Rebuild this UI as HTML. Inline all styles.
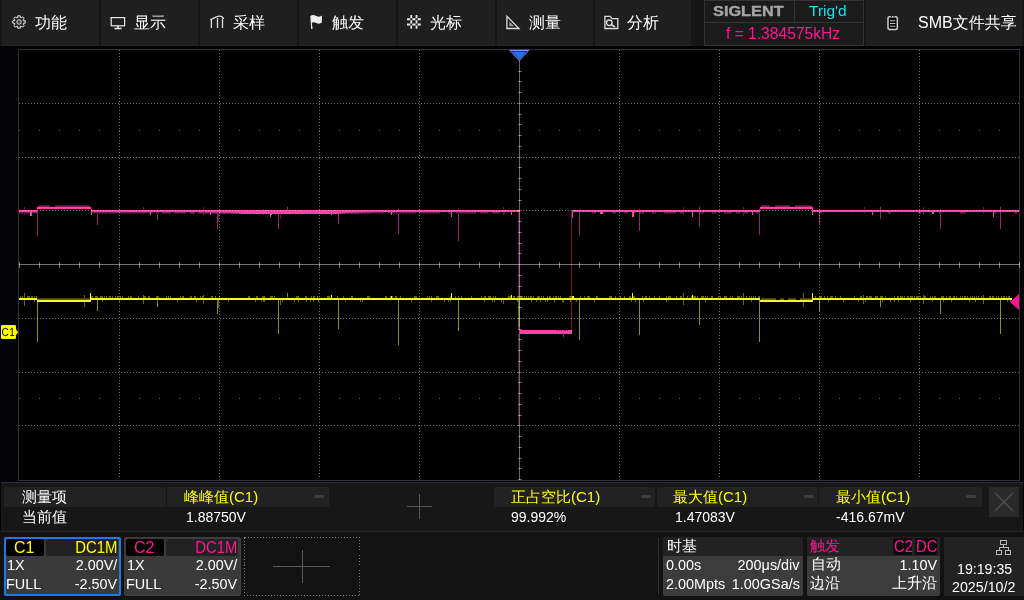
<!DOCTYPE html>
<html lang="zh-CN">
<head>
<meta charset="utf-8">
<title>SIGLENT Oscilloscope</title>
<style>
html,body{margin:0;padding:0;}
body{width:1024px;height:600px;overflow:hidden;background:#030308;position:relative;
 font-family:"Liberation Sans","WenQuanYi Zen Hei","Noto Sans CJK SC",sans-serif;color:#ffffff;}
.abs,.graph,.tb,.t{position:absolute;}
.graph{left:0;top:0;}
/* top bar */
#topbar{position:absolute;left:0;top:0;width:1024px;height:46px;background:#161616;}
.tb{top:0;height:45px;background:#1f1f1f;border-bottom:1px solid #262626;box-sizing:content-box;height:45px;}
.tb .lbl{position:absolute;left:33px;top:0;line-height:45px;font-size:16px;white-space:nowrap;color:#fff;}
.tb svg{position:absolute;}
.t{white-space:nowrap;line-height:1;}
#wrap{position:absolute;left:0;top:0;width:1024px;height:600px;will-change:transform;}
/* status */
#status{position:absolute;left:704px;top:0;width:158px;height:44px;border:1px solid #333;background:#1b1b1b;}
/* measure */
#meas{position:absolute;left:1px;top:482px;width:1022px;height:48px;background:#171717;border-top:1px solid #2a2a30;}
.mh{position:absolute;top:487px;height:20px;background:#222222;}
.ml{position:absolute;top:489px;font-size:15px;line-height:16px;white-space:nowrap;}
.mv{position:absolute;top:509px;font-size:14px;line-height:16px;white-space:nowrap;color:#fff;}
.sl{transform:scaleX(.96);transform-origin:0 0;}
.sr{transform:scaleX(.96);transform-origin:100% 0;}
.hl{transform:scaleX(.93);transform-origin:0 0;}
.hr{transform:scaleX(.93);transform-origin:100% 0;}
.yl{color:#ffff00;}
.pk{color:#ff1493;}
.minus{position:absolute;top:495px;width:10px;height:3px;border-radius:1.500px;background:#3e3e3e;}
/* bottom */
#bottom{position:absolute;left:0;top:531px;width:1024px;height:69px;background:#121212;border-top:1px solid #26262c;}
.ch{position:absolute;top:537px;width:116.500px;height:58.500px;background:#3a3a3a;box-sizing:border-box;border-radius:2px;}
.box{position:absolute;top:537px;height:58.500px;background:#3c3c3c;border-radius:2px;}
</style>
</head>
<body>
<div id="wrap">
<svg class="graph" width="1024" height="600" viewBox="0 0 1024 600" shape-rendering="crispEdges"><rect x="18.5" y="49.5" width="1001" height="431" fill="#000" stroke="#2f2f34"/><g><rect x="518" y="212" width="1" height="118" fill="#641644"/><rect x="519" y="212" width="1" height="118" fill="#3a122c"/><rect x="518" y="334" width="1" height="92" fill="#5a143e"/><rect x="571" y="212" width="1" height="118" fill="#6c1649"/><rect x="563" y="334" width="1" height="3" fill="#9c206a"/><rect x="24" y="207" width="1" height="8" fill="#6a1646"/><rect x="37" y="209" width="1" height="27" fill="#9c206a"/><rect x="97" y="211" width="1" height="14" fill="#9c206a"/><rect x="143" y="207" width="1" height="8" fill="#6a1646"/><rect x="157" y="211" width="1" height="9" fill="#9c206a"/><rect x="203" y="207" width="1" height="8" fill="#6a1646"/><rect x="217" y="211" width="1" height="18" fill="#9c206a"/><rect x="218" y="211" width="1" height="11" fill="#6a1646"/><rect x="263" y="209" width="1" height="6" fill="#6a1646"/><rect x="278" y="211" width="1" height="18" fill="#9c206a"/><rect x="280" y="211" width="1" height="8" fill="#6a1646"/><rect x="287" y="207" width="1" height="4" fill="#9c206a"/><rect x="289" y="211" width="1" height="4" fill="#6a1646"/><rect x="338" y="211" width="1" height="13" fill="#9c206a"/><rect x="398" y="209" width="1" height="25" fill="#9c206a"/><rect x="458" y="209" width="1" height="32" fill="#9c206a"/><rect x="503" y="207" width="1" height="8" fill="#6a1646"/><rect x="579" y="209" width="1" height="27" fill="#9c206a"/><rect x="639" y="209" width="1" height="22" fill="#9c206a"/><rect x="683" y="207" width="1" height="8" fill="#6a1646"/><rect x="699" y="207" width="1" height="20" fill="#9c206a"/><rect x="743" y="207" width="1" height="9" fill="#6a1646"/><rect x="759" y="209" width="1" height="26" fill="#9c206a"/><rect x="819" y="211" width="1" height="13" fill="#9c206a"/><rect x="864" y="207" width="1" height="6" fill="#6a1646"/><rect x="880" y="207" width="1" height="12" fill="#9c206a"/><rect x="923" y="207" width="1" height="8" fill="#6a1646"/><rect x="940" y="209" width="1" height="20" fill="#9c206a"/><rect x="983" y="207" width="1" height="6" fill="#6a1646"/><rect x="1000" y="207" width="1" height="22" fill="#9c206a"/><rect x="19" y="212" width="18" height="1" fill="#6a1a46"/><rect x="93" y="212" width="60" height="1" fill="#6a1a46"/><rect x="156" y="212" width="3" height="1" fill="#6a1a46"/><rect x="162" y="212" width="9" height="1" fill="#822055"/><rect x="174" y="212" width="12" height="1" fill="#822055"/><rect x="189" y="212" width="6" height="1" fill="#822055"/><rect x="198" y="212" width="9" height="1" fill="#822055"/><rect x="207" y="212" width="8" height="1" fill="#9a2765"/><rect x="215" y="212" width="9" height="1" fill="#b22e75"/><rect x="224" y="212" width="9" height="1" fill="#ca3484"/><rect x="233" y="212" width="8" height="1" fill="#e23b94"/><rect x="241" y="212" width="98" height="1" fill="#fa42a4"/><rect x="339" y="212" width="6" height="1" fill="#e23b94"/><rect x="345" y="212" width="7" height="1" fill="#ca3484"/><rect x="352" y="212" width="7" height="1" fill="#b22e75"/><rect x="359" y="212" width="6" height="1" fill="#9a2765"/><rect x="365" y="212" width="7" height="1" fill="#822055"/><rect x="372" y="212" width="12" height="1" fill="#6a1a46"/><rect x="388" y="212" width="28" height="1" fill="#6a1a46"/><rect x="420" y="212" width="20" height="1" fill="#6a1a46"/><rect x="448" y="212" width="4" height="1" fill="#6a1a46"/><rect x="456" y="212" width="20" height="1" fill="#6a1a46"/><rect x="480" y="212" width="8" height="1" fill="#6a1a46"/><rect x="492" y="212" width="8" height="1" fill="#6a1a46"/><rect x="504" y="212" width="1" height="1" fill="#6a1a46"/><rect x="592" y="212" width="4" height="1" fill="#6a1a46"/><rect x="600" y="212" width="4" height="1" fill="#6a1a46"/><rect x="612" y="212" width="4" height="1" fill="#6a1a46"/><rect x="624" y="212" width="4" height="1" fill="#6a1a46"/><rect x="632" y="212" width="4" height="1" fill="#6a1a46"/><rect x="640" y="212" width="4" height="1" fill="#6a1a46"/><rect x="652" y="212" width="4" height="1" fill="#6a1a46"/><rect x="664" y="212" width="12" height="1" fill="#6a1a46"/><rect x="680" y="212" width="4" height="1" fill="#6a1a46"/><rect x="700" y="212" width="4" height="1" fill="#6a1a46"/><rect x="712" y="212" width="4" height="1" fill="#6a1a46"/><rect x="724" y="212" width="8" height="1" fill="#6a1a46"/><rect x="736" y="212" width="4" height="1" fill="#6a1a46"/><rect x="744" y="212" width="4" height="1" fill="#6a1a46"/><rect x="756" y="212" width="4" height="1" fill="#6a1a46"/><rect x="819" y="212" width="3" height="1" fill="#6a1a46"/><rect x="888" y="212" width="3" height="1" fill="#6a1a46"/><rect x="918" y="212" width="3" height="1" fill="#6a1a46"/><rect x="939" y="212" width="3" height="1" fill="#6a1a46"/><rect x="960" y="212" width="6" height="1" fill="#6a1a46"/><rect x="993" y="212" width="3" height="1" fill="#6a1a46"/><rect x="1014" y="212" width="3" height="1" fill="#6a1a46"/><rect x="19" y="213" width="18" height="1" fill="#440f2d"/><rect x="93" y="213" width="60" height="1" fill="#440f2d"/><rect x="156" y="213" width="3" height="1" fill="#440f2d"/><rect x="162" y="213" width="9" height="1" fill="#440f2d"/><rect x="174" y="213" width="12" height="1" fill="#440f2d"/><rect x="189" y="213" width="2" height="1" fill="#440f2d"/><rect x="191" y="213" width="4" height="1" fill="#5e163e"/><rect x="198" y="213" width="18" height="1" fill="#5e163e"/><rect x="216" y="213" width="15" height="1" fill="#781e4f"/><rect x="231" y="213" width="8" height="1" fill="#922560"/><rect x="239" y="213" width="2" height="1" fill="#e03b93"/><rect x="241" y="213" width="98" height="1" fill="#fa42a4"/><rect x="339" y="213" width="2" height="1" fill="#e03b93"/><rect x="341" y="213" width="5" height="1" fill="#922560"/><rect x="346" y="213" width="12" height="1" fill="#781e4f"/><rect x="358" y="213" width="12" height="1" fill="#5e163e"/><rect x="370" y="213" width="14" height="1" fill="#440f2d"/><rect x="388" y="213" width="28" height="1" fill="#440f2d"/><rect x="420" y="213" width="20" height="1" fill="#440f2d"/><rect x="448" y="213" width="4" height="1" fill="#440f2d"/><rect x="456" y="213" width="20" height="1" fill="#440f2d"/><rect x="480" y="213" width="8" height="1" fill="#440f2d"/><rect x="492" y="213" width="8" height="1" fill="#440f2d"/><rect x="504" y="213" width="1" height="1" fill="#440f2d"/><rect x="592" y="213" width="4" height="1" fill="#440f2d"/><rect x="600" y="213" width="4" height="1" fill="#440f2d"/><rect x="612" y="213" width="4" height="1" fill="#440f2d"/><rect x="624" y="213" width="4" height="1" fill="#440f2d"/><rect x="632" y="213" width="4" height="1" fill="#440f2d"/><rect x="640" y="213" width="4" height="1" fill="#440f2d"/><rect x="652" y="213" width="4" height="1" fill="#440f2d"/><rect x="664" y="213" width="12" height="1" fill="#440f2d"/><rect x="680" y="213" width="4" height="1" fill="#440f2d"/><rect x="700" y="213" width="4" height="1" fill="#440f2d"/><rect x="712" y="213" width="4" height="1" fill="#440f2d"/><rect x="724" y="213" width="8" height="1" fill="#440f2d"/><rect x="736" y="213" width="4" height="1" fill="#440f2d"/><rect x="744" y="213" width="4" height="1" fill="#440f2d"/><rect x="756" y="213" width="4" height="1" fill="#440f2d"/><rect x="819" y="213" width="3" height="1" fill="#440f2d"/><rect x="888" y="213" width="3" height="1" fill="#440f2d"/><rect x="918" y="213" width="3" height="1" fill="#440f2d"/><rect x="939" y="213" width="3" height="1" fill="#440f2d"/><rect x="960" y="213" width="6" height="1" fill="#440f2d"/><rect x="993" y="213" width="3" height="1" fill="#440f2d"/><rect x="1014" y="213" width="3" height="1" fill="#440f2d"/><rect x="19" y="210" width="18" height="2" fill="#fa42a4"/><rect x="91" y="210" width="429" height="2" fill="#fa42a4"/><rect x="572" y="210" width="188" height="2" fill="#fa42a4"/><rect x="813" y="210" width="206" height="2" fill="#fa42a4"/><rect x="37" y="207" width="54" height="2" fill="#fa42a4"/><rect x="38" y="205" width="12" height="1" fill="#521336"/><rect x="55" y="205" width="35" height="1" fill="#521336"/><rect x="38" y="206" width="12" height="1" fill="#822055"/><rect x="55" y="206" width="35" height="1" fill="#822055"/><rect x="760" y="207" width="53" height="2" fill="#fa42a4"/><rect x="761" y="205" width="9" height="1" fill="#521336"/><rect x="775" y="205" width="15" height="1" fill="#521336"/><rect x="795" y="205" width="17" height="1" fill="#521336"/><rect x="761" y="206" width="9" height="1" fill="#822055"/><rect x="775" y="206" width="15" height="1" fill="#822055"/><rect x="795" y="206" width="17" height="1" fill="#822055"/><rect x="520" y="330" width="52" height="4" fill="#fa42a4"/><rect x="556" y="330" width="2" height="1" fill="#9c206a"/><rect x="559" y="330" width="1" height="1" fill="#9c206a"/><rect x="561" y="330" width="1" height="1" fill="#9c206a"/><rect x="564" y="330" width="2" height="1" fill="#9c206a"/><rect x="567" y="330" width="1" height="1" fill="#9c206a"/><rect x="30" y="211" width="2" height="5" fill="#fa42a4"/><rect x="91" y="209" width="1" height="6" fill="#fa42a4"/><rect x="150" y="211" width="1" height="4" fill="#fa42a4"/><rect x="210" y="211" width="1" height="4" fill="#fa42a4"/><rect x="270" y="211" width="1" height="6" fill="#fa42a4"/><rect x="271" y="211" width="1" height="4" fill="#fa42a4"/><rect x="331" y="211" width="1" height="4" fill="#fa42a4"/><rect x="391" y="211" width="1" height="4" fill="#fa42a4"/><rect x="451" y="211" width="1" height="6" fill="#fa42a4"/><rect x="511" y="211" width="1" height="4" fill="#fa42a4"/><rect x="572" y="211" width="1" height="7" fill="#fa42a4"/><rect x="600" y="211" width="3" height="3" fill="#fa42a4"/><rect x="632" y="211" width="2" height="6" fill="#fa42a4"/><rect x="692" y="211" width="1" height="6" fill="#fa42a4"/><rect x="752" y="211" width="1" height="4" fill="#fa42a4"/><rect x="812" y="209" width="1" height="6" fill="#fa42a4"/><rect x="872" y="211" width="1" height="4" fill="#fa42a4"/><rect x="932" y="211" width="2" height="3" fill="#fa42a4"/><rect x="993" y="211" width="1" height="6" fill="#fa42a4"/></g><g><rect x="24" y="293" width="1" height="13" fill="#66660f"/><rect x="37" y="299" width="1" height="43" fill="#8e8e1a"/><rect x="84" y="295" width="1" height="12" fill="#66660f"/><rect x="97" y="299" width="1" height="12" fill="#8e8e1a"/><rect x="143" y="295" width="1" height="9" fill="#66660f"/><rect x="157" y="299" width="1" height="8" fill="#8e8e1a"/><rect x="203" y="295" width="1" height="9" fill="#66660f"/><rect x="217" y="299" width="1" height="15" fill="#8e8e1a"/><rect x="218" y="299" width="1" height="9" fill="#66660f"/><rect x="263" y="296" width="1" height="6" fill="#66660f"/><rect x="278" y="299" width="1" height="35" fill="#8e8e1a"/><rect x="280" y="299" width="1" height="6" fill="#66660f"/><rect x="287" y="293" width="1" height="6" fill="#8e8e1a"/><rect x="338" y="299" width="1" height="30" fill="#8e8e1a"/><rect x="398" y="299" width="1" height="46" fill="#8e8e1a"/><rect x="458" y="299" width="1" height="32" fill="#8e8e1a"/><rect x="503" y="299" width="1" height="5" fill="#66660f"/><rect x="518" y="299" width="2" height="28" fill="#66660f"/><rect x="563" y="299" width="1" height="4" fill="#66660f"/><rect x="579" y="299" width="1" height="41" fill="#8e8e1a"/><rect x="639" y="299" width="1" height="36" fill="#8e8e1a"/><rect x="683" y="293" width="1" height="12" fill="#66660f"/><rect x="699" y="299" width="1" height="26" fill="#8e8e1a"/><rect x="743" y="293" width="1" height="12" fill="#66660f"/><rect x="759" y="299" width="1" height="43" fill="#8e8e1a"/><rect x="803" y="293" width="1" height="14" fill="#66660f"/><rect x="819" y="299" width="1" height="12" fill="#8e8e1a"/><rect x="863" y="295" width="1" height="9" fill="#66660f"/><rect x="880" y="299" width="1" height="8" fill="#8e8e1a"/><rect x="923" y="295" width="1" height="9" fill="#66660f"/><rect x="940" y="299" width="1" height="15" fill="#8e8e1a"/><rect x="983" y="295" width="1" height="9" fill="#66660f"/><rect x="1000" y="299" width="1" height="35" fill="#8e8e1a"/><rect x="20" y="296" width="1" height="2" fill="#66660f"/><rect x="22" y="296" width="1" height="2" fill="#66660f"/><rect x="27" y="296" width="3" height="2" fill="#66660f"/><rect x="31" y="296" width="2" height="2" fill="#66660f"/><rect x="34" y="296" width="1" height="2" fill="#66660f"/><rect x="36" y="296" width="1" height="2" fill="#66660f"/><rect x="34" y="300" width="1" height="2" fill="#66660f"/><rect x="19" y="298" width="18" height="2" fill="#f6f62c"/><rect x="91" y="296" width="2" height="2" fill="#66660f"/><rect x="95" y="296" width="3" height="2" fill="#66660f"/><rect x="100" y="296" width="3" height="2" fill="#66660f"/><rect x="104" y="296" width="1" height="2" fill="#66660f"/><rect x="106" y="296" width="1" height="2" fill="#66660f"/><rect x="109" y="296" width="2" height="2" fill="#66660f"/><rect x="112" y="296" width="1" height="2" fill="#66660f"/><rect x="115" y="296" width="1" height="2" fill="#66660f"/><rect x="117" y="296" width="2" height="2" fill="#66660f"/><rect x="120" y="296" width="1" height="2" fill="#66660f"/><rect x="122" y="296" width="1" height="2" fill="#66660f"/><rect x="128" y="296" width="1" height="2" fill="#66660f"/><rect x="130" y="296" width="2" height="2" fill="#66660f"/><rect x="138" y="296" width="1" height="2" fill="#66660f"/><rect x="143" y="296" width="3" height="2" fill="#66660f"/><rect x="148" y="296" width="2" height="2" fill="#66660f"/><rect x="156" y="296" width="3" height="2" fill="#66660f"/><rect x="166" y="296" width="1" height="2" fill="#66660f"/><rect x="168" y="296" width="1" height="2" fill="#66660f"/><rect x="170" y="296" width="1" height="2" fill="#66660f"/><rect x="180" y="296" width="1" height="2" fill="#66660f"/><rect x="182" y="296" width="2" height="2" fill="#66660f"/><rect x="190" y="296" width="2" height="2" fill="#66660f"/><rect x="194" y="296" width="2" height="2" fill="#66660f"/><rect x="200" y="296" width="1" height="2" fill="#66660f"/><rect x="202" y="296" width="2" height="2" fill="#66660f"/><rect x="211" y="296" width="2" height="2" fill="#66660f"/><rect x="215" y="296" width="1" height="2" fill="#66660f"/><rect x="219" y="296" width="1" height="2" fill="#66660f"/><rect x="248" y="296" width="2" height="2" fill="#66660f"/><rect x="256" y="296" width="2" height="2" fill="#66660f"/><rect x="262" y="296" width="3" height="2" fill="#66660f"/><rect x="270" y="296" width="3" height="2" fill="#66660f"/><rect x="274" y="296" width="1" height="2" fill="#66660f"/><rect x="287" y="296" width="1" height="2" fill="#66660f"/><rect x="296" y="296" width="3" height="2" fill="#66660f"/><rect x="305" y="296" width="2" height="2" fill="#66660f"/><rect x="311" y="296" width="1" height="2" fill="#66660f"/><rect x="313" y="296" width="2" height="2" fill="#66660f"/><rect x="317" y="296" width="1" height="2" fill="#66660f"/><rect x="327" y="296" width="3" height="2" fill="#66660f"/><rect x="337" y="296" width="1" height="2" fill="#66660f"/><rect x="343" y="296" width="1" height="2" fill="#66660f"/><rect x="351" y="296" width="2" height="2" fill="#66660f"/><rect x="367" y="296" width="3" height="2" fill="#66660f"/><rect x="385" y="296" width="2" height="2" fill="#66660f"/><rect x="390" y="296" width="3" height="2" fill="#66660f"/><rect x="395" y="296" width="2" height="2" fill="#66660f"/><rect x="400" y="296" width="1" height="2" fill="#66660f"/><rect x="414" y="296" width="3" height="2" fill="#66660f"/><rect x="427" y="296" width="1" height="2" fill="#66660f"/><rect x="429" y="296" width="1" height="2" fill="#66660f"/><rect x="431" y="296" width="1" height="2" fill="#66660f"/><rect x="436" y="296" width="3" height="2" fill="#66660f"/><rect x="450" y="296" width="1" height="2" fill="#66660f"/><rect x="455" y="296" width="1" height="2" fill="#66660f"/><rect x="458" y="296" width="1" height="2" fill="#66660f"/><rect x="461" y="296" width="1" height="2" fill="#66660f"/><rect x="471" y="296" width="1" height="2" fill="#66660f"/><rect x="481" y="296" width="1" height="2" fill="#66660f"/><rect x="484" y="296" width="2" height="2" fill="#66660f"/><rect x="488" y="296" width="3" height="2" fill="#66660f"/><rect x="493" y="296" width="1" height="2" fill="#66660f"/><rect x="495" y="296" width="1" height="2" fill="#66660f"/><rect x="508" y="296" width="3" height="2" fill="#66660f"/><rect x="513" y="296" width="2" height="2" fill="#66660f"/><rect x="517" y="296" width="2" height="2" fill="#66660f"/><rect x="520" y="296" width="3" height="2" fill="#66660f"/><rect x="524" y="296" width="1" height="2" fill="#66660f"/><rect x="526" y="296" width="1" height="2" fill="#66660f"/><rect x="528" y="296" width="1" height="2" fill="#66660f"/><rect x="530" y="296" width="2" height="2" fill="#66660f"/><rect x="533" y="296" width="1" height="2" fill="#66660f"/><rect x="537" y="296" width="3" height="2" fill="#66660f"/><rect x="541" y="296" width="1" height="2" fill="#66660f"/><rect x="543" y="296" width="1" height="2" fill="#66660f"/><rect x="547" y="296" width="1" height="2" fill="#66660f"/><rect x="549" y="296" width="2" height="2" fill="#66660f"/><rect x="553" y="296" width="1" height="2" fill="#66660f"/><rect x="555" y="296" width="2" height="2" fill="#66660f"/><rect x="558" y="296" width="1" height="2" fill="#66660f"/><rect x="560" y="296" width="1" height="2" fill="#66660f"/><rect x="569" y="296" width="3" height="2" fill="#66660f"/><rect x="580" y="296" width="1" height="2" fill="#66660f"/><rect x="584" y="296" width="1" height="2" fill="#66660f"/><rect x="587" y="296" width="3" height="2" fill="#66660f"/><rect x="596" y="296" width="2" height="2" fill="#66660f"/><rect x="609" y="296" width="3" height="2" fill="#66660f"/><rect x="615" y="296" width="1" height="2" fill="#66660f"/><rect x="620" y="296" width="1" height="2" fill="#66660f"/><rect x="624" y="296" width="1" height="2" fill="#66660f"/><rect x="629" y="296" width="2" height="2" fill="#66660f"/><rect x="633" y="296" width="2" height="2" fill="#66660f"/><rect x="642" y="296" width="1" height="2" fill="#66660f"/><rect x="645" y="296" width="2" height="2" fill="#66660f"/><rect x="649" y="296" width="1" height="2" fill="#66660f"/><rect x="654" y="296" width="1" height="2" fill="#66660f"/><rect x="659" y="296" width="1" height="2" fill="#66660f"/><rect x="666" y="296" width="1" height="2" fill="#66660f"/><rect x="668" y="296" width="3" height="2" fill="#66660f"/><rect x="676" y="296" width="1" height="2" fill="#66660f"/><rect x="680" y="296" width="2" height="2" fill="#66660f"/><rect x="683" y="296" width="1" height="2" fill="#66660f"/><rect x="687" y="296" width="1" height="2" fill="#66660f"/><rect x="691" y="296" width="1" height="2" fill="#66660f"/><rect x="693" y="296" width="3" height="2" fill="#66660f"/><rect x="697" y="296" width="1" height="2" fill="#66660f"/><rect x="701" y="296" width="3" height="2" fill="#66660f"/><rect x="705" y="296" width="1" height="2" fill="#66660f"/><rect x="707" y="296" width="1" height="2" fill="#66660f"/><rect x="711" y="296" width="2" height="2" fill="#66660f"/><rect x="718" y="296" width="1" height="2" fill="#66660f"/><rect x="720" y="296" width="1" height="2" fill="#66660f"/><rect x="724" y="296" width="3" height="2" fill="#66660f"/><rect x="730" y="296" width="1" height="2" fill="#66660f"/><rect x="732" y="296" width="1" height="2" fill="#66660f"/><rect x="737" y="296" width="3" height="2" fill="#66660f"/><rect x="741" y="296" width="1" height="2" fill="#66660f"/><rect x="746" y="296" width="1" height="2" fill="#66660f"/><rect x="749" y="296" width="1" height="2" fill="#66660f"/><rect x="751" y="296" width="1" height="2" fill="#66660f"/><rect x="753" y="296" width="1" height="2" fill="#66660f"/><rect x="755" y="296" width="1" height="2" fill="#66660f"/><rect x="758" y="296" width="2" height="2" fill="#66660f"/><rect x="102" y="300" width="1" height="2" fill="#66660f"/><rect x="119" y="300" width="1" height="2" fill="#66660f"/><rect x="157" y="300" width="1" height="2" fill="#66660f"/><rect x="177" y="300" width="1" height="2" fill="#66660f"/><rect x="196" y="300" width="1" height="2" fill="#66660f"/><rect x="217" y="300" width="1" height="2" fill="#66660f"/><rect x="228" y="300" width="1" height="2" fill="#66660f"/><rect x="255" y="300" width="1" height="2" fill="#66660f"/><rect x="261" y="300" width="1" height="2" fill="#66660f"/><rect x="264" y="300" width="1" height="2" fill="#66660f"/><rect x="282" y="300" width="1" height="2" fill="#66660f"/><rect x="294" y="300" width="1" height="2" fill="#66660f"/><rect x="298" y="300" width="1" height="2" fill="#66660f"/><rect x="306" y="300" width="1" height="2" fill="#66660f"/><rect x="310" y="300" width="1" height="2" fill="#66660f"/><rect x="313" y="300" width="1" height="2" fill="#66660f"/><rect x="318" y="300" width="1" height="2" fill="#66660f"/><rect x="345" y="300" width="1" height="2" fill="#66660f"/><rect x="360" y="300" width="1" height="2" fill="#66660f"/><rect x="362" y="300" width="1" height="2" fill="#66660f"/><rect x="411" y="300" width="1" height="2" fill="#66660f"/><rect x="431" y="300" width="1" height="2" fill="#66660f"/><rect x="444" y="300" width="1" height="2" fill="#66660f"/><rect x="448" y="300" width="1" height="2" fill="#66660f"/><rect x="450" y="300" width="1" height="2" fill="#66660f"/><rect x="484" y="300" width="1" height="2" fill="#66660f"/><rect x="492" y="300" width="1" height="2" fill="#66660f"/><rect x="494" y="300" width="1" height="2" fill="#66660f"/><rect x="501" y="300" width="1" height="2" fill="#66660f"/><rect x="503" y="300" width="1" height="2" fill="#66660f"/><rect x="517" y="300" width="1" height="2" fill="#66660f"/><rect x="531" y="300" width="1" height="2" fill="#66660f"/><rect x="536" y="300" width="1" height="2" fill="#66660f"/><rect x="540" y="300" width="1" height="2" fill="#66660f"/><rect x="545" y="300" width="1" height="2" fill="#66660f"/><rect x="547" y="300" width="1" height="2" fill="#66660f"/><rect x="554" y="300" width="1" height="2" fill="#66660f"/><rect x="562" y="300" width="1" height="2" fill="#66660f"/><rect x="570" y="300" width="1" height="2" fill="#66660f"/><rect x="576" y="300" width="1" height="2" fill="#66660f"/><rect x="594" y="300" width="1" height="2" fill="#66660f"/><rect x="631" y="300" width="1" height="2" fill="#66660f"/><rect x="635" y="300" width="1" height="2" fill="#66660f"/><rect x="643" y="300" width="1" height="2" fill="#66660f"/><rect x="666" y="300" width="1" height="2" fill="#66660f"/><rect x="705" y="300" width="1" height="2" fill="#66660f"/><rect x="751" y="300" width="1" height="2" fill="#66660f"/><rect x="91" y="298" width="669" height="2" fill="#f6f62c"/><rect x="815" y="296" width="1" height="2" fill="#66660f"/><rect x="819" y="296" width="3" height="2" fill="#66660f"/><rect x="824" y="296" width="1" height="2" fill="#66660f"/><rect x="827" y="296" width="1" height="2" fill="#66660f"/><rect x="830" y="296" width="3" height="2" fill="#66660f"/><rect x="835" y="296" width="1" height="2" fill="#66660f"/><rect x="840" y="296" width="1" height="2" fill="#66660f"/><rect x="854" y="296" width="1" height="2" fill="#66660f"/><rect x="860" y="296" width="2" height="2" fill="#66660f"/><rect x="866" y="296" width="2" height="2" fill="#66660f"/><rect x="869" y="296" width="3" height="2" fill="#66660f"/><rect x="875" y="296" width="3" height="2" fill="#66660f"/><rect x="880" y="296" width="3" height="2" fill="#66660f"/><rect x="885" y="296" width="1" height="2" fill="#66660f"/><rect x="894" y="296" width="1" height="2" fill="#66660f"/><rect x="897" y="296" width="2" height="2" fill="#66660f"/><rect x="900" y="296" width="3" height="2" fill="#66660f"/><rect x="904" y="296" width="1" height="2" fill="#66660f"/><rect x="907" y="296" width="2" height="2" fill="#66660f"/><rect x="910" y="296" width="3" height="2" fill="#66660f"/><rect x="914" y="296" width="1" height="2" fill="#66660f"/><rect x="916" y="296" width="3" height="2" fill="#66660f"/><rect x="920" y="296" width="1" height="2" fill="#66660f"/><rect x="923" y="296" width="3" height="2" fill="#66660f"/><rect x="930" y="296" width="1" height="2" fill="#66660f"/><rect x="932" y="296" width="1" height="2" fill="#66660f"/><rect x="934" y="296" width="2" height="2" fill="#66660f"/><rect x="941" y="296" width="3" height="2" fill="#66660f"/><rect x="946" y="296" width="1" height="2" fill="#66660f"/><rect x="949" y="296" width="2" height="2" fill="#66660f"/><rect x="953" y="296" width="2" height="2" fill="#66660f"/><rect x="956" y="296" width="1" height="2" fill="#66660f"/><rect x="960" y="296" width="1" height="2" fill="#66660f"/><rect x="962" y="296" width="1" height="2" fill="#66660f"/><rect x="964" y="296" width="2" height="2" fill="#66660f"/><rect x="967" y="296" width="1" height="2" fill="#66660f"/><rect x="970" y="296" width="1" height="2" fill="#66660f"/><rect x="972" y="296" width="1" height="2" fill="#66660f"/><rect x="974" y="296" width="1" height="2" fill="#66660f"/><rect x="976" y="296" width="1" height="2" fill="#66660f"/><rect x="978" y="296" width="1" height="2" fill="#66660f"/><rect x="981" y="296" width="1" height="2" fill="#66660f"/><rect x="983" y="296" width="1" height="2" fill="#66660f"/><rect x="989" y="296" width="2" height="2" fill="#66660f"/><rect x="992" y="296" width="2" height="2" fill="#66660f"/><rect x="996" y="296" width="1" height="2" fill="#66660f"/><rect x="998" y="296" width="1" height="2" fill="#66660f"/><rect x="1001" y="296" width="1" height="2" fill="#66660f"/><rect x="1003" y="296" width="2" height="2" fill="#66660f"/><rect x="1006" y="296" width="1" height="2" fill="#66660f"/><rect x="1008" y="296" width="2" height="2" fill="#66660f"/><rect x="828" y="300" width="1" height="2" fill="#66660f"/><rect x="843" y="300" width="1" height="2" fill="#66660f"/><rect x="858" y="300" width="1" height="2" fill="#66660f"/><rect x="865" y="300" width="1" height="2" fill="#66660f"/><rect x="882" y="300" width="1" height="2" fill="#66660f"/><rect x="890" y="300" width="1" height="2" fill="#66660f"/><rect x="894" y="300" width="1" height="2" fill="#66660f"/><rect x="898" y="300" width="1" height="2" fill="#66660f"/><rect x="910" y="300" width="1" height="2" fill="#66660f"/><rect x="932" y="300" width="1" height="2" fill="#66660f"/><rect x="943" y="300" width="1" height="2" fill="#66660f"/><rect x="951" y="300" width="1" height="2" fill="#66660f"/><rect x="969" y="300" width="1" height="2" fill="#66660f"/><rect x="975" y="300" width="1" height="2" fill="#66660f"/><rect x="1007" y="300" width="1" height="2" fill="#66660f"/><rect x="1010" y="300" width="1" height="2" fill="#66660f"/><rect x="813" y="298" width="199" height="2" fill="#f6f62c"/><rect x="38" y="298" width="52" height="1" fill="#45450b"/><rect x="38" y="299" width="52" height="1" fill="#5e5e10"/><rect x="37" y="300" width="54" height="2" fill="#f6f62c"/><rect x="761" y="298" width="15" height="1" fill="#45450b"/><rect x="780" y="298" width="4" height="1" fill="#45450b"/><rect x="788" y="298" width="8" height="1" fill="#45450b"/><rect x="800" y="298" width="12" height="1" fill="#45450b"/><rect x="761" y="299" width="15" height="1" fill="#5e5e10"/><rect x="780" y="299" width="4" height="1" fill="#5e5e10"/><rect x="788" y="299" width="8" height="1" fill="#5e5e10"/><rect x="800" y="299" width="12" height="1" fill="#5e5e10"/><rect x="760" y="300" width="53" height="2" fill="#f6f62c"/><rect x="90" y="293" width="1" height="8" fill="#f6f62c"/><rect x="331" y="295" width="1" height="4" fill="#f6f62c"/><rect x="391" y="296" width="1" height="3" fill="#f6f62c"/><rect x="451" y="293" width="1" height="6" fill="#f6f62c"/><rect x="511" y="295" width="1" height="4" fill="#f6f62c"/><rect x="572" y="296" width="2" height="3" fill="#f6f62c"/><rect x="632" y="293" width="1" height="6" fill="#f6f62c"/><rect x="692" y="295" width="1" height="4" fill="#f6f62c"/><rect x="812" y="293" width="1" height="8" fill="#f6f62c"/></g><g style="mix-blend-mode:screen"><line x1="119.5" y1="50" x2="119.5" y2="479" stroke="#6e6e6e" stroke-dasharray="1 2"/><line x1="219.5" y1="50" x2="219.5" y2="479" stroke="#6e6e6e" stroke-dasharray="1 2"/><line x1="319.5" y1="50" x2="319.5" y2="479" stroke="#6e6e6e" stroke-dasharray="1 2"/><line x1="419.5" y1="50" x2="419.5" y2="479" stroke="#6e6e6e" stroke-dasharray="1 2"/><line x1="619.5" y1="50" x2="619.5" y2="479" stroke="#6e6e6e" stroke-dasharray="1 2"/><line x1="719.5" y1="50" x2="719.5" y2="479" stroke="#6e6e6e" stroke-dasharray="1 2"/><line x1="819.5" y1="50" x2="819.5" y2="479" stroke="#6e6e6e" stroke-dasharray="1 2"/><line x1="919.5" y1="50" x2="919.5" y2="479" stroke="#6e6e6e" stroke-dasharray="1 2"/><line x1="19" y1="103.5" x2="1019" y2="103.5" stroke="#6e6e6e" stroke-dasharray="1 2"/><line x1="19" y1="157.5" x2="1019" y2="157.5" stroke="#6e6e6e" stroke-dasharray="1 2"/><line x1="19" y1="210.5" x2="1019" y2="210.5" stroke="#6e6e6e" stroke-dasharray="1 2"/><line x1="19" y1="318.5" x2="1019" y2="318.5" stroke="#6e6e6e" stroke-dasharray="1 2"/><line x1="19" y1="372.5" x2="1019" y2="372.5" stroke="#6e6e6e" stroke-dasharray="1 2"/><line x1="19" y1="425.5" x2="1019" y2="425.5" stroke="#6e6e6e" stroke-dasharray="1 2"/><line x1="19" y1="130.5" x2="1019" y2="130.5" stroke="#5c5c5c" stroke-dasharray="1 19"/><line x1="19" y1="398.5" x2="1019" y2="398.5" stroke="#5c5c5c" stroke-dasharray="1 19"/><rect x="19" y="264" width="1000" height="1" fill="#727272"/><rect x="519" y="61" width="1" height="419" fill="#666666"/><rect x="19" y="262" width="1" height="2" fill="#727272"/><rect x="19" y="265" width="1" height="3" fill="#727272"/><rect x="19" y="264" width="1" height="1" fill="#bcbcbc"/><rect x="39" y="262" width="1" height="2" fill="#727272"/><rect x="39" y="265" width="1" height="3" fill="#727272"/><rect x="39" y="264" width="1" height="1" fill="#bcbcbc"/><rect x="59" y="262" width="1" height="2" fill="#727272"/><rect x="59" y="265" width="1" height="3" fill="#727272"/><rect x="59" y="264" width="1" height="1" fill="#bcbcbc"/><rect x="79" y="262" width="1" height="2" fill="#727272"/><rect x="79" y="265" width="1" height="3" fill="#727272"/><rect x="79" y="264" width="1" height="1" fill="#bcbcbc"/><rect x="99" y="262" width="1" height="2" fill="#727272"/><rect x="99" y="265" width="1" height="3" fill="#727272"/><rect x="99" y="264" width="1" height="1" fill="#bcbcbc"/><rect x="119" y="262" width="1" height="2" fill="#727272"/><rect x="119" y="265" width="1" height="3" fill="#727272"/><rect x="119" y="264" width="1" height="1" fill="#bcbcbc"/><rect x="139" y="262" width="1" height="2" fill="#727272"/><rect x="139" y="265" width="1" height="3" fill="#727272"/><rect x="139" y="264" width="1" height="1" fill="#bcbcbc"/><rect x="159" y="262" width="1" height="2" fill="#727272"/><rect x="159" y="265" width="1" height="3" fill="#727272"/><rect x="159" y="264" width="1" height="1" fill="#bcbcbc"/><rect x="179" y="262" width="1" height="2" fill="#727272"/><rect x="179" y="265" width="1" height="3" fill="#727272"/><rect x="179" y="264" width="1" height="1" fill="#bcbcbc"/><rect x="199" y="262" width="1" height="2" fill="#727272"/><rect x="199" y="265" width="1" height="3" fill="#727272"/><rect x="199" y="264" width="1" height="1" fill="#bcbcbc"/><rect x="219" y="262" width="1" height="2" fill="#727272"/><rect x="219" y="265" width="1" height="3" fill="#727272"/><rect x="219" y="264" width="1" height="1" fill="#bcbcbc"/><rect x="239" y="262" width="1" height="2" fill="#727272"/><rect x="239" y="265" width="1" height="3" fill="#727272"/><rect x="239" y="264" width="1" height="1" fill="#bcbcbc"/><rect x="259" y="262" width="1" height="2" fill="#727272"/><rect x="259" y="265" width="1" height="3" fill="#727272"/><rect x="259" y="264" width="1" height="1" fill="#bcbcbc"/><rect x="279" y="262" width="1" height="2" fill="#727272"/><rect x="279" y="265" width="1" height="3" fill="#727272"/><rect x="279" y="264" width="1" height="1" fill="#bcbcbc"/><rect x="299" y="262" width="1" height="2" fill="#727272"/><rect x="299" y="265" width="1" height="3" fill="#727272"/><rect x="299" y="264" width="1" height="1" fill="#bcbcbc"/><rect x="319" y="262" width="1" height="2" fill="#727272"/><rect x="319" y="265" width="1" height="3" fill="#727272"/><rect x="319" y="264" width="1" height="1" fill="#bcbcbc"/><rect x="339" y="262" width="1" height="2" fill="#727272"/><rect x="339" y="265" width="1" height="3" fill="#727272"/><rect x="339" y="264" width="1" height="1" fill="#bcbcbc"/><rect x="359" y="262" width="1" height="2" fill="#727272"/><rect x="359" y="265" width="1" height="3" fill="#727272"/><rect x="359" y="264" width="1" height="1" fill="#bcbcbc"/><rect x="379" y="262" width="1" height="2" fill="#727272"/><rect x="379" y="265" width="1" height="3" fill="#727272"/><rect x="379" y="264" width="1" height="1" fill="#bcbcbc"/><rect x="399" y="262" width="1" height="2" fill="#727272"/><rect x="399" y="265" width="1" height="3" fill="#727272"/><rect x="399" y="264" width="1" height="1" fill="#bcbcbc"/><rect x="419" y="262" width="1" height="2" fill="#727272"/><rect x="419" y="265" width="1" height="3" fill="#727272"/><rect x="419" y="264" width="1" height="1" fill="#bcbcbc"/><rect x="439" y="262" width="1" height="2" fill="#727272"/><rect x="439" y="265" width="1" height="3" fill="#727272"/><rect x="439" y="264" width="1" height="1" fill="#bcbcbc"/><rect x="459" y="262" width="1" height="2" fill="#727272"/><rect x="459" y="265" width="1" height="3" fill="#727272"/><rect x="459" y="264" width="1" height="1" fill="#bcbcbc"/><rect x="479" y="262" width="1" height="2" fill="#727272"/><rect x="479" y="265" width="1" height="3" fill="#727272"/><rect x="479" y="264" width="1" height="1" fill="#bcbcbc"/><rect x="499" y="262" width="1" height="2" fill="#727272"/><rect x="499" y="265" width="1" height="3" fill="#727272"/><rect x="499" y="264" width="1" height="1" fill="#bcbcbc"/><rect x="519" y="262" width="1" height="2" fill="#727272"/><rect x="519" y="265" width="1" height="3" fill="#727272"/><rect x="519" y="264" width="1" height="1" fill="#bcbcbc"/><rect x="539" y="262" width="1" height="2" fill="#727272"/><rect x="539" y="265" width="1" height="3" fill="#727272"/><rect x="539" y="264" width="1" height="1" fill="#bcbcbc"/><rect x="559" y="262" width="1" height="2" fill="#727272"/><rect x="559" y="265" width="1" height="3" fill="#727272"/><rect x="559" y="264" width="1" height="1" fill="#bcbcbc"/><rect x="579" y="262" width="1" height="2" fill="#727272"/><rect x="579" y="265" width="1" height="3" fill="#727272"/><rect x="579" y="264" width="1" height="1" fill="#bcbcbc"/><rect x="599" y="262" width="1" height="2" fill="#727272"/><rect x="599" y="265" width="1" height="3" fill="#727272"/><rect x="599" y="264" width="1" height="1" fill="#bcbcbc"/><rect x="619" y="262" width="1" height="2" fill="#727272"/><rect x="619" y="265" width="1" height="3" fill="#727272"/><rect x="619" y="264" width="1" height="1" fill="#bcbcbc"/><rect x="639" y="262" width="1" height="2" fill="#727272"/><rect x="639" y="265" width="1" height="3" fill="#727272"/><rect x="639" y="264" width="1" height="1" fill="#bcbcbc"/><rect x="659" y="262" width="1" height="2" fill="#727272"/><rect x="659" y="265" width="1" height="3" fill="#727272"/><rect x="659" y="264" width="1" height="1" fill="#bcbcbc"/><rect x="679" y="262" width="1" height="2" fill="#727272"/><rect x="679" y="265" width="1" height="3" fill="#727272"/><rect x="679" y="264" width="1" height="1" fill="#bcbcbc"/><rect x="699" y="262" width="1" height="2" fill="#727272"/><rect x="699" y="265" width="1" height="3" fill="#727272"/><rect x="699" y="264" width="1" height="1" fill="#bcbcbc"/><rect x="719" y="262" width="1" height="2" fill="#727272"/><rect x="719" y="265" width="1" height="3" fill="#727272"/><rect x="719" y="264" width="1" height="1" fill="#bcbcbc"/><rect x="739" y="262" width="1" height="2" fill="#727272"/><rect x="739" y="265" width="1" height="3" fill="#727272"/><rect x="739" y="264" width="1" height="1" fill="#bcbcbc"/><rect x="759" y="262" width="1" height="2" fill="#727272"/><rect x="759" y="265" width="1" height="3" fill="#727272"/><rect x="759" y="264" width="1" height="1" fill="#bcbcbc"/><rect x="779" y="262" width="1" height="2" fill="#727272"/><rect x="779" y="265" width="1" height="3" fill="#727272"/><rect x="779" y="264" width="1" height="1" fill="#bcbcbc"/><rect x="799" y="262" width="1" height="2" fill="#727272"/><rect x="799" y="265" width="1" height="3" fill="#727272"/><rect x="799" y="264" width="1" height="1" fill="#bcbcbc"/><rect x="819" y="262" width="1" height="2" fill="#727272"/><rect x="819" y="265" width="1" height="3" fill="#727272"/><rect x="819" y="264" width="1" height="1" fill="#bcbcbc"/><rect x="839" y="262" width="1" height="2" fill="#727272"/><rect x="839" y="265" width="1" height="3" fill="#727272"/><rect x="839" y="264" width="1" height="1" fill="#bcbcbc"/><rect x="859" y="262" width="1" height="2" fill="#727272"/><rect x="859" y="265" width="1" height="3" fill="#727272"/><rect x="859" y="264" width="1" height="1" fill="#bcbcbc"/><rect x="879" y="262" width="1" height="2" fill="#727272"/><rect x="879" y="265" width="1" height="3" fill="#727272"/><rect x="879" y="264" width="1" height="1" fill="#bcbcbc"/><rect x="899" y="262" width="1" height="2" fill="#727272"/><rect x="899" y="265" width="1" height="3" fill="#727272"/><rect x="899" y="264" width="1" height="1" fill="#bcbcbc"/><rect x="919" y="262" width="1" height="2" fill="#727272"/><rect x="919" y="265" width="1" height="3" fill="#727272"/><rect x="919" y="264" width="1" height="1" fill="#bcbcbc"/><rect x="939" y="262" width="1" height="2" fill="#727272"/><rect x="939" y="265" width="1" height="3" fill="#727272"/><rect x="939" y="264" width="1" height="1" fill="#bcbcbc"/><rect x="959" y="262" width="1" height="2" fill="#727272"/><rect x="959" y="265" width="1" height="3" fill="#727272"/><rect x="959" y="264" width="1" height="1" fill="#bcbcbc"/><rect x="979" y="262" width="1" height="2" fill="#727272"/><rect x="979" y="265" width="1" height="3" fill="#727272"/><rect x="979" y="264" width="1" height="1" fill="#bcbcbc"/><rect x="999" y="262" width="1" height="2" fill="#727272"/><rect x="999" y="265" width="1" height="3" fill="#727272"/><rect x="999" y="264" width="1" height="1" fill="#bcbcbc"/><rect x="1019" y="262" width="1" height="2" fill="#727272"/><rect x="1019" y="265" width="1" height="3" fill="#727272"/><rect x="1019" y="264" width="1" height="1" fill="#bcbcbc"/><rect x="518" y="71" width="1" height="1" fill="#5a5a5a"/><rect x="520" y="71" width="2" height="1" fill="#5a5a5a"/><rect x="519" y="71" width="1" height="1" fill="#a8a8a8"/><rect x="518" y="81" width="1" height="1" fill="#5a5a5a"/><rect x="520" y="81" width="2" height="1" fill="#5a5a5a"/><rect x="519" y="81" width="1" height="1" fill="#a8a8a8"/><rect x="518" y="92" width="1" height="1" fill="#5a5a5a"/><rect x="520" y="92" width="2" height="1" fill="#5a5a5a"/><rect x="519" y="92" width="1" height="1" fill="#a8a8a8"/><rect x="518" y="103" width="1" height="1" fill="#5a5a5a"/><rect x="520" y="103" width="2" height="1" fill="#5a5a5a"/><rect x="519" y="103" width="1" height="1" fill="#a8a8a8"/><rect x="518" y="114" width="1" height="1" fill="#5a5a5a"/><rect x="520" y="114" width="2" height="1" fill="#5a5a5a"/><rect x="519" y="114" width="1" height="1" fill="#a8a8a8"/><rect x="518" y="124" width="1" height="1" fill="#5a5a5a"/><rect x="520" y="124" width="2" height="1" fill="#5a5a5a"/><rect x="519" y="124" width="1" height="1" fill="#a8a8a8"/><rect x="518" y="135" width="1" height="1" fill="#5a5a5a"/><rect x="520" y="135" width="2" height="1" fill="#5a5a5a"/><rect x="519" y="135" width="1" height="1" fill="#a8a8a8"/><rect x="518" y="146" width="1" height="1" fill="#5a5a5a"/><rect x="520" y="146" width="2" height="1" fill="#5a5a5a"/><rect x="519" y="146" width="1" height="1" fill="#a8a8a8"/><rect x="518" y="157" width="1" height="1" fill="#5a5a5a"/><rect x="520" y="157" width="2" height="1" fill="#5a5a5a"/><rect x="519" y="157" width="1" height="1" fill="#a8a8a8"/><rect x="518" y="167" width="1" height="1" fill="#5a5a5a"/><rect x="520" y="167" width="2" height="1" fill="#5a5a5a"/><rect x="519" y="167" width="1" height="1" fill="#a8a8a8"/><rect x="518" y="178" width="1" height="1" fill="#5a5a5a"/><rect x="520" y="178" width="2" height="1" fill="#5a5a5a"/><rect x="519" y="178" width="1" height="1" fill="#a8a8a8"/><rect x="518" y="189" width="1" height="1" fill="#5a5a5a"/><rect x="520" y="189" width="2" height="1" fill="#5a5a5a"/><rect x="519" y="189" width="1" height="1" fill="#a8a8a8"/><rect x="518" y="200" width="1" height="1" fill="#5a5a5a"/><rect x="520" y="200" width="2" height="1" fill="#5a5a5a"/><rect x="519" y="200" width="1" height="1" fill="#a8a8a8"/><rect x="518" y="210" width="1" height="1" fill="#5a5a5a"/><rect x="520" y="210" width="2" height="1" fill="#5a5a5a"/><rect x="519" y="210" width="1" height="1" fill="#a8a8a8"/><rect x="518" y="221" width="1" height="1" fill="#5a5a5a"/><rect x="520" y="221" width="2" height="1" fill="#5a5a5a"/><rect x="519" y="221" width="1" height="1" fill="#a8a8a8"/><rect x="518" y="232" width="1" height="1" fill="#5a5a5a"/><rect x="520" y="232" width="2" height="1" fill="#5a5a5a"/><rect x="519" y="232" width="1" height="1" fill="#a8a8a8"/><rect x="518" y="243" width="1" height="1" fill="#5a5a5a"/><rect x="520" y="243" width="2" height="1" fill="#5a5a5a"/><rect x="519" y="243" width="1" height="1" fill="#a8a8a8"/><rect x="518" y="253" width="1" height="1" fill="#5a5a5a"/><rect x="520" y="253" width="2" height="1" fill="#5a5a5a"/><rect x="519" y="253" width="1" height="1" fill="#a8a8a8"/><rect x="518" y="275" width="1" height="1" fill="#5a5a5a"/><rect x="520" y="275" width="2" height="1" fill="#5a5a5a"/><rect x="519" y="275" width="1" height="1" fill="#a8a8a8"/><rect x="518" y="286" width="1" height="1" fill="#5a5a5a"/><rect x="520" y="286" width="2" height="1" fill="#5a5a5a"/><rect x="519" y="286" width="1" height="1" fill="#a8a8a8"/><rect x="518" y="296" width="1" height="1" fill="#5a5a5a"/><rect x="520" y="296" width="2" height="1" fill="#5a5a5a"/><rect x="519" y="296" width="1" height="1" fill="#a8a8a8"/><rect x="518" y="307" width="1" height="1" fill="#5a5a5a"/><rect x="520" y="307" width="2" height="1" fill="#5a5a5a"/><rect x="519" y="307" width="1" height="1" fill="#a8a8a8"/><rect x="518" y="318" width="1" height="1" fill="#5a5a5a"/><rect x="520" y="318" width="2" height="1" fill="#5a5a5a"/><rect x="519" y="318" width="1" height="1" fill="#a8a8a8"/><rect x="518" y="329" width="1" height="1" fill="#5a5a5a"/><rect x="520" y="329" width="2" height="1" fill="#5a5a5a"/><rect x="519" y="329" width="1" height="1" fill="#a8a8a8"/><rect x="518" y="339" width="1" height="1" fill="#5a5a5a"/><rect x="520" y="339" width="2" height="1" fill="#5a5a5a"/><rect x="519" y="339" width="1" height="1" fill="#a8a8a8"/><rect x="518" y="350" width="1" height="1" fill="#5a5a5a"/><rect x="520" y="350" width="2" height="1" fill="#5a5a5a"/><rect x="519" y="350" width="1" height="1" fill="#a8a8a8"/><rect x="518" y="361" width="1" height="1" fill="#5a5a5a"/><rect x="520" y="361" width="2" height="1" fill="#5a5a5a"/><rect x="519" y="361" width="1" height="1" fill="#a8a8a8"/><rect x="518" y="372" width="1" height="1" fill="#5a5a5a"/><rect x="520" y="372" width="2" height="1" fill="#5a5a5a"/><rect x="519" y="372" width="1" height="1" fill="#a8a8a8"/><rect x="518" y="382" width="1" height="1" fill="#5a5a5a"/><rect x="520" y="382" width="2" height="1" fill="#5a5a5a"/><rect x="519" y="382" width="1" height="1" fill="#a8a8a8"/><rect x="518" y="393" width="1" height="1" fill="#5a5a5a"/><rect x="520" y="393" width="2" height="1" fill="#5a5a5a"/><rect x="519" y="393" width="1" height="1" fill="#a8a8a8"/><rect x="518" y="404" width="1" height="1" fill="#5a5a5a"/><rect x="520" y="404" width="2" height="1" fill="#5a5a5a"/><rect x="519" y="404" width="1" height="1" fill="#a8a8a8"/><rect x="518" y="415" width="1" height="1" fill="#5a5a5a"/><rect x="520" y="415" width="2" height="1" fill="#5a5a5a"/><rect x="519" y="415" width="1" height="1" fill="#a8a8a8"/><rect x="518" y="425" width="1" height="1" fill="#5a5a5a"/><rect x="520" y="425" width="2" height="1" fill="#5a5a5a"/><rect x="519" y="425" width="1" height="1" fill="#a8a8a8"/><rect x="518" y="436" width="1" height="1" fill="#5a5a5a"/><rect x="520" y="436" width="2" height="1" fill="#5a5a5a"/><rect x="519" y="436" width="1" height="1" fill="#a8a8a8"/><rect x="518" y="447" width="1" height="1" fill="#5a5a5a"/><rect x="520" y="447" width="2" height="1" fill="#5a5a5a"/><rect x="519" y="447" width="1" height="1" fill="#a8a8a8"/><rect x="518" y="458" width="1" height="1" fill="#5a5a5a"/><rect x="520" y="458" width="2" height="1" fill="#5a5a5a"/><rect x="519" y="458" width="1" height="1" fill="#a8a8a8"/><rect x="518" y="468" width="1" height="1" fill="#5a5a5a"/><rect x="520" y="468" width="2" height="1" fill="#5a5a5a"/><rect x="519" y="468" width="1" height="1" fill="#a8a8a8"/><rect x="518" y="479" width="1" height="1" fill="#5a5a5a"/><rect x="520" y="479" width="2" height="1" fill="#5a5a5a"/><rect x="519" y="479" width="1" height="1" fill="#a8a8a8"/></g><g shape-rendering="geometricPrecision"><polygon points="508.8,49.8 529.8,49.8 519.3,61.3" fill="#8b83f6"/><polygon points="510.900,50.900 527.700,50.900 519.300,60.100" fill="#1c2260"/><polygon points="512.500,51.800 526.100,51.800 519.300,59.200" fill="#1a7ae2"/></g><polygon points="1019,294 1019,310 1010,302" fill="#ff1493" shape-rendering="geometricPrecision"/></svg>
<div id="topbar">
 <div class="tb" style="left:2px;width:97px;">
  <svg style="left:9.600px;top:14.800px" width="14" height="14" viewBox="0 0 14 14"><g fill="none" stroke="#f2f2f2" stroke-width="1" stroke-linejoin="miter"><path d="M5.77 2.57 L5.75 0.83 L8.25 0.83 L8.23 2.57 L9.27 3.00 L10.48 1.75 L12.25 3.52 L11.00 4.73 L11.43 5.77 L13.17 5.75 L13.17 8.25 L11.43 8.23 L11.00 9.27 L12.25 10.48 L10.48 12.25 L9.27 11.00 L8.23 11.43 L8.25 13.17 L5.75 13.17 L5.77 11.43 L4.73 11.00 L3.52 12.25 L1.75 10.48 L3.00 9.27 L2.57 8.23 L0.83 8.25 L0.83 5.75 L2.57 5.77 L3.00 4.73 L1.75 3.52 L3.52 1.75 L4.73 3.00Z"/><circle cx="7" cy="7" r="2.200"/></g><circle cx="7" cy="7" r=".6" fill="#999"/></svg>
  <span class="lbl">功能</span></div>
 <div class="tb" style="left:101px;width:97px;">
  <svg style="left:9px;top:15.500px" width="16" height="14" viewBox="0 0 16 14"><g fill="none" stroke="#ececec" stroke-width="1.200"><rect x="1.200" y="1.600" width="13.400" height="8.200"/><path d="M8 10v2.200M4.500 12.600h7" stroke-width="1.500"/></g></svg>
  <span class="lbl">显示</span></div>
 <div class="tb" style="left:200px;width:97px;">
  <svg style="left:9px;top:14px" width="16" height="16" viewBox="0 0 16 16"><g fill="none" stroke="#dedede" stroke-width="1.300"><path d="M2.400 14V5.600M8.500 14V4M13.500 14V4.500M1.200 5.600C4 5 7 2.200 10.500 2.200S14 3.500 14.600 4.900"/></g></svg>
  <span class="lbl">采样</span></div>
 <div class="tb" style="left:299px;width:97px;">
  <svg style="left:10px;top:14px" width="16" height="16" viewBox="0 0 16 16"><path d="M1.300 2c2-1.400 4-1 6 0s4 1 5.600-.4v7c-1.600 1.400-3.600 1.400-5.600.4s-3.400-.9-4.500-.2L3.600 15H2.200z" fill="#ededed"/></svg>
  <span class="lbl">触发</span></div>
 <div class="tb" style="left:398px;width:97px;">
  <svg style="left:8px;top:14px" width="16" height="16" viewBox="0 0 16 16"><path d="M1 5.25H4.2M5.25 1V4.2M6.3 5.25H9.5M5.25 6.3V9.5M11.6 5.25H14.8M5.25 11.6V14.8M1 10.5H4.2M10.5 1V4.2M6.3 10.5H9.5M10.5 6.3V9.5M11.6 10.5H14.8M10.5 11.6V14.8" fill="none" stroke="#ececec" stroke-width="1.800"/></svg>
  <span class="lbl" style="left:32px">光标</span></div>
 <div class="tb" style="left:497px;width:96px;">
  <svg style="left:8px;top:14px" width="18" height="16" viewBox="0 0 18 16"><g fill="none" stroke="#dedede" stroke-width="1.300"><path d="M1.900 2.300V14.500H14z"/></g><path d="M4.300 7.500V12.200H9.200z" fill="#9a9a9a"/></svg>
  <span class="lbl" style="left:32px">测量</span></div>
 <div class="tb" style="left:595px;width:96px;">
  <svg style="left:8px;top:14px" width="18" height="16" viewBox="0 0 18 16"><g fill="none" stroke="#dedede" stroke-width="1.300"><path d="M1.900 14.500V2.300h5.100l2.100 2.300h5.700v9.900z"/><circle cx="6.300" cy="8.800" r="2.800"/><path d="M8.400 10.700l3.600 2.200" stroke-width="1.600"/></g></svg>
  <span class="lbl" style="left:32px">分析</span></div>
 <div id="status">
  <div class="abs" style="left:0;top:21px;width:158px;height:1px;background:#333"></div>
  <div class="abs" style="left:89px;top:0;width:1px;height:21px;background:#333"></div>
  <div class="t" style="left:8px;top:2.500px;font-size:14.500px;font-weight:bold;color:#a6a6a6;transform:scaleX(1.125);transform-origin:0 0;-webkit-text-stroke:.35px #a6a6a6;">SIGLENT</div>
  <div class="t" style="left:104px;top:2px;font-size:15.500px;color:#10e4ee;">Trig'd</div>
  <div class="t" style="left:21px;top:25px;font-size:15.600px;color:#ff1493;">f = 1.384575kHz</div>
 </div>
 <div class="tb" style="left:866px;width:156px;">
  <svg style="left:20px;top:15px" width="14" height="16" viewBox="0 0 14 16"><rect x="2" y="1.800" width="9.300" height="12.700" rx="1.500" fill="#050505" stroke="#cfcfcf" stroke-width="1.500"/><path d="M4 5.750h5.300M4 8.500h5.300M4 11.250h5.300" stroke="#bdbdbd" stroke-width="1.200"/><path d="M5.300 1v1.200M8 1v1.200" stroke="#1f1f1f" stroke-width="1"/></svg>
  <span class="lbl" style="left:52px">SMB文件共享</span></div>
</div>

<!-- measurement panel -->
<div id="meas"></div>
<div class="mh" style="left:4px;width:162px;"></div>
<div class="mh" style="left:167px;width:162px;"></div>
<div class="mh" style="left:494px;width:161px;"></div>
<div class="mh" style="left:657px;width:161px;"></div>
<div class="mh" style="left:819px;width:163px;"></div>
<div class="ml" style="left:22px;">测量项</div>
<div class="mv" style="left:22px;font-size:15px;">当前值</div>
<div class="ml yl" style="left:184px;">峰峰值(C1)</div>
<div class="mv" style="left:186px;">1.88750V</div>
<div class="ml yl" style="left:511px;">正占空比(C1)</div>
<div class="mv" style="left:511px;">99.992%</div>
<div class="ml yl" style="left:673px;">最大值(C1)</div>
<div class="mv" style="left:675px;">1.47083V</div>
<div class="ml yl" style="left:836px;">最小值(C1)</div>
<div class="mv" style="left:836px;">-416.67mV</div>
<div class="minus" style="left:314px"></div>
<div class="minus" style="left:641px"></div>
<div class="minus" style="left:804px"></div>
<div class="minus" style="left:966px"></div>
<svg class="abs" style="left:406px;top:493px" width="28" height="28" viewBox="0 0 28 28" shape-rendering="crispEdges"><path d="M1 13.500h25M13.500 1v25" stroke="#585858" stroke-width="1"/></svg>
<div class="abs" style="left:989px;top:487px;width:30px;height:30px;background:#2a2a2a;"></div>
<svg class="abs" style="left:989px;top:487px" width="30" height="30" viewBox="0 0 30 30"><path d="M6 6L24 24M24 6L6 24" stroke="#4c4c4c" stroke-width="1.500"/></svg>

<!-- bottom -->
<div id="bottom"></div>
<!-- C1 -->
<div class="ch" style="left:4px;border:2px solid #1e7be6;"></div>
<div class="abs" style="left:6px;top:539px;width:38px;height:17px;background:#000;border-radius:2px;"></div>
<div class="abs" style="left:46px;top:539px;width:72px;height:17px;background:#222;border-radius:2px;"></div>
<div class="t yl" style="left:14px;top:540px;font-size:16px;">C1</div>
<div class="t hr yl" style="right:906.500px;top:540px;font-size:16px;">DC1M</div>
<div class="t sl" style="left:7px;top:556.500px;font-size:15px;">1X</div>
<div class="t sr" style="right:906.500px;top:556.500px;font-size:15px;">2.00V/</div>
<div class="t sl" style="left:6px;top:575.500px;font-size:15px;">FULL</div>
<div class="t sr" style="right:906.500px;top:575.500px;font-size:15px;">-2.50V</div>
<!-- C2 -->
<div class="ch" style="left:124px;border:1px solid #3f3f3f;"></div>
<div class="abs" style="left:126px;top:539px;width:38px;height:17px;background:#000;border-radius:2px;"></div>
<div class="abs" style="left:166px;top:539px;width:72px;height:17px;background:#222;border-radius:2px;"></div>
<div class="t pk" style="left:134px;top:540px;font-size:16px;">C2</div>
<div class="t hr pk" style="right:786.500px;top:540px;font-size:16px;">DC1M</div>
<div class="t sl" style="left:127px;top:556.500px;font-size:15px;">1X</div>
<div class="t sr" style="right:786.500px;top:556.500px;font-size:15px;">2.00V/</div>
<div class="t sl" style="left:126px;top:575.500px;font-size:15px;">FULL</div>
<div class="t sr" style="right:786.500px;top:575.500px;font-size:15px;">-2.50V</div>
<!-- add box -->
<svg class="abs" style="left:244px;top:537px" width="116" height="60" viewBox="0 0 116 60" shape-rendering="crispEdges"><rect x="0.500" y="0.500" width="115" height="58" fill="none" stroke="#777" stroke-dasharray="1 2"/><path d="M29 29.500h57M58.500 13v33" stroke="#5a5a5a" stroke-width="1"/></svg>
<!-- timebase -->
<div class="abs" style="left:658px;top:537px;width:1px;height:58px;background:#303030;"></div>
<div class="box" style="left:663px;width:140px;"></div>
<div class="abs" style="left:663px;top:537px;width:140px;height:19px;background:#222;border-radius:2px 2px 0 0;"></div>
<div class="t" style="left:667px;top:538px;font-size:15px;">时基</div>
<div class="t sl" style="left:666px;top:556.500px;font-size:15px;">0.00s</div>
<div class="t sr" style="right:224px;top:556.500px;font-size:15px;">200μs/div</div>
<div class="t sl" style="left:666px;top:575.500px;font-size:15px;">2.00Mpts</div>
<div class="t sr" style="right:224px;top:575.500px;font-size:15px;">1.00GSa/s</div>
<!-- trigger -->
<div class="box" style="left:807px;width:133px;"></div>
<div class="abs" style="left:807px;top:537px;width:133px;height:19px;background:#222;border-radius:2px 2px 0 0;"></div>
<div class="abs" style="left:893px;top:538px;width:19px;height:17px;background:#0c0c0c;border-radius:2px;"></div>
<div class="abs" style="left:915px;top:538px;width:22px;height:17px;background:#0c0c0c;border-radius:2px;"></div>
<div class="t pk" style="left:810px;top:538px;font-size:15px;">触发</div>
<div class="t hl pk" style="left:894px;top:539px;font-size:16px;">C2</div>
<div class="t hl pk" style="left:916px;top:539px;font-size:16px;">DC</div>
<div class="t" style="left:811px;top:555.500px;font-size:15px;">自动</div>
<div class="t sr" style="right:87px;top:556.500px;font-size:15px;">1.10V</div>
<div class="t" style="left:810px;top:574.500px;font-size:15px;">边沿</div>
<div class="t" style="right:87px;top:574.500px;font-size:15px;">上升沿</div>
<!-- clock -->
<div class="abs" style="left:944px;top:537px;width:80px;height:58.500px;background:#222;border-radius:2px;"></div>
<svg class="abs" style="left:995px;top:539px" width="18" height="17" viewBox="0 0 18 17" shape-rendering="crispEdges"><g fill="none" stroke="#b8b8b8" stroke-width="1"><rect x="5.500" y="1.500" width="6" height="4"/><rect x="1.500" y="11.500" width="5" height="4"/><rect x="10.500" y="11.500" width="5" height="4"/><path d="M8.500 5.500v3M4 11.500v-3h9.500v3"/></g></svg>
<div class="t sl" style="left:957px;top:560.500px;font-size:15px;transform:scaleX(.945)">19:19:35</div>
<div class="t sl" style="left:952px;top:578.500px;font-size:15px;transform:scaleX(.95)">2025/10/2</div>
<!-- C1 marker -->
<svg class="abs" style="left:0;top:324px" width="20" height="17" viewBox="0 0 20 17"><path d="M2 1h13l1 1v3.600l2.200 2.700-2.200 2.700v3l-1 1H2l-1-1V2z" fill="#ffff00"/></svg>
<div class="t" style="left:1.500px;top:327.500px;font-size:10px;color:#000;letter-spacing:.5px;">C1</div>
</div>
</body>
</html>
